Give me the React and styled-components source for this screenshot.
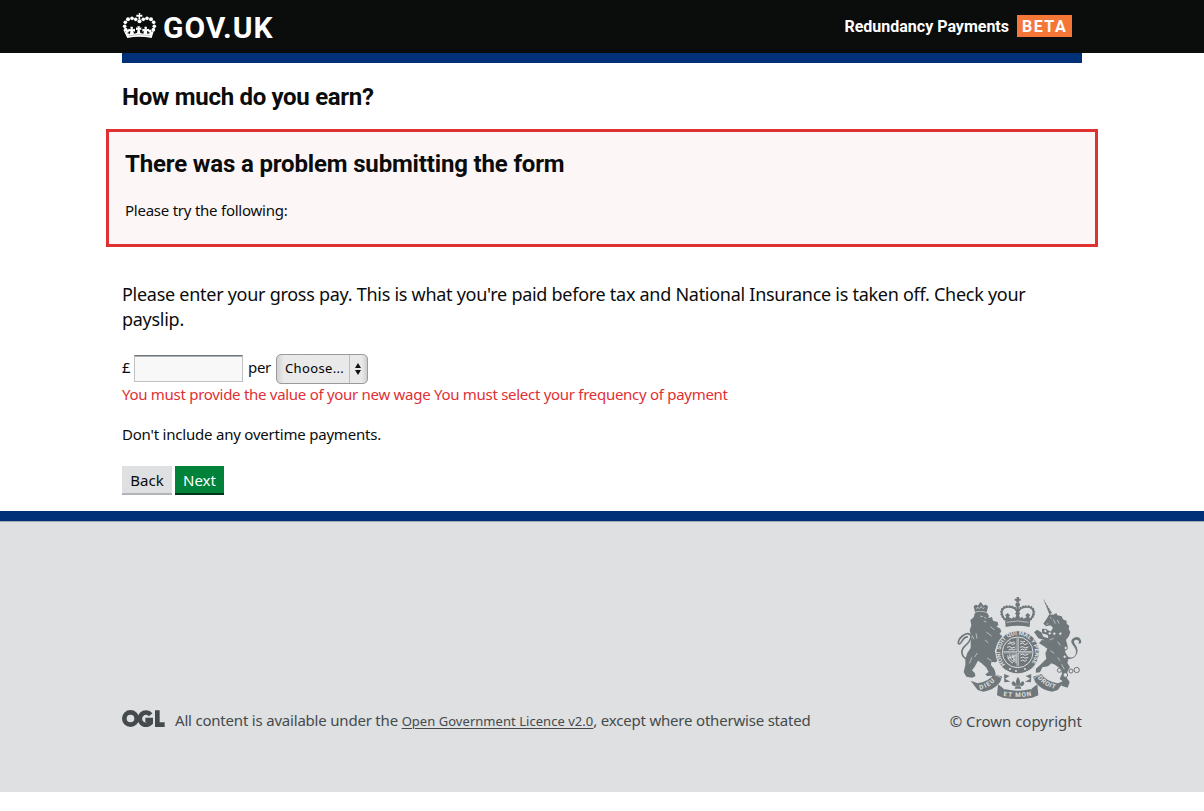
import React from 'react';
import styled, { createGlobalStyle } from 'styled-components';

const GlobalStyle = createGlobalStyle`
  *, *::before, *::after { box-sizing: border-box; }
  body {
    margin: 0;
    background: #fff;
    color: #0b0c0c;
    font-family: "Noto Sans", "Open Sans", sans-serif;
    font-size: 15px;
  }
  h1, h2, p { margin: 0; }
`;

const Header = styled.header`
  height: 53px;
  background: #0b0c0c;
`;

const Container = styled.div`
  width: 960px;
  margin: 0 auto;
`;

const HeaderInner = styled(Container)`
  display: flex;
  align-items: flex-start;
  justify-content: space-between;
  padding-right: 10px;
`;

const Logo = styled.a`
  display: flex;
  align-items: flex-start;
  gap: 6px;
  color: #fff;
  padding-top: 12px;
`;

const Wordmark = styled.span`
  font-family: Roboto, sans-serif;
  font-weight: 700;
  font-size: 30px;
  line-height: 32px;
  letter-spacing: 0.95px;
  white-space: nowrap;
`;

const Service = styled.div`
  display: flex;
  align-items: center;
  gap: 8px;
  height: 22px;
  margin-top: 15px;
  color: #fff;
  font-weight: 700;
`;

const ServiceName = styled.span`
  padding-top: 2px;
  font-family: Roboto, sans-serif;
  font-size: 16px;
  line-height: 22px;
  white-space: nowrap;
`;

const Beta = styled.span`
  width: 55px;
  height: 22px;
  padding-left: 5px;
  background: #f47738;
  font-family: Roboto, sans-serif;
  font-size: 16px;
  line-height: 23px;
  letter-spacing: 1.5px;
`;

const BlueBar = styled.div`
  height: 10px;
  background: #003078;
`;

const Title = styled.h1`
  margin-top: 19px;
  font-family: Roboto, sans-serif;
  font-size: 24px;
  font-weight: 700;
  line-height: 30px;
  letter-spacing: -0.31px;
  white-space: nowrap;
`;

const ErrorSummary = styled.section`
  height: 118px;
  margin: 17px -16px 0;
  padding: 17px 16px 0;
  border: 3px solid #df3034;
  background: #fdf6f6;
`;

const ErrorTitle = styled(Title).attrs({ as: 'h2' })`
  margin-top: 0;
  letter-spacing: -0.16px;
`;

const Text = styled.p`
  margin-top: ${(p) => p.$top || 0}px;
  color: ${(p) => p.$color || 'inherit'};
  font-size: ${(p) => p.$size || 15}px;
  line-height: ${(p) => p.$line || 20}px;
  letter-spacing: ${(p) => p.$track || 0}px;
`;

const FieldRow = styled.div`
  display: flex;
  align-items: center;
  height: 30px;
  margin-top: 22px;
`;

const FieldText = styled.label`
  width: ${(p) => p.$width}px;
  line-height: 20px;
  margin-top: -4px;
  letter-spacing: -0.3px;
`;

const AmountInput = styled.input`
  width: 109px;
  height: 27px;
  margin: 0 5px 2px 0;
  padding: 2px;
  border: 1px solid #bfc1c3;
  border-top: 1px solid #6f777b;
  box-shadow: inset 0 1px 0 #a9adaf;
  background: #f8f8f8;
  border-radius: 0;
`;

const Select = styled.button`
  display: flex;
  width: 92px;
  height: 30px;
  padding: 0;
  border: 1px solid #9a9a9a;
  border-radius: 5px;
  background: linear-gradient(90deg, #d2d2d2 0, #eaeaea 7px, #e9e9e9 85px, #cfcfcf 100%);
  color: #000;
  font-family: "Noto Sans", sans-serif;
  font-size: 13px;
  letter-spacing: 0.35px;
`;

const SelectValue = styled.span`
  flex: 1;
  padding-left: 8px;
  text-align: left;
  line-height: 27px;
`;

const SelectArrows = styled.span`
  display: flex;
  align-items: center;
  justify-content: center;
  width: 18px;
  height: 28px;
  padding-right: 2px;
  border-left: 1px solid #bdbdbd;
`;

const Actions = styled.div`
  display: flex;
  gap: 3px;
  margin-top: 22px;
`;

const Button = styled.button`
  width: ${(p) => p.$width}px;
  height: 29px;
  padding: 0;
  border: 0;
  background: ${(p) => (p.$primary ? '#00823b' : '#dee0e2')};
  box-shadow: inset 0 -2px 0 ${(p) => (p.$primary ? '#003618' : '#b1b5b9')};
  color: ${(p) => (p.$primary ? '#fff' : '#0b0c0c')};
  font-family: inherit;
  font-size: 15px;
  line-height: 29px;
`;

const Footer = styled.footer`
  height: 281px;
  margin-top: 16px;
  border-top: 10px solid #003078;
  background: #dee0e2;
  color: #454a4c;
  box-shadow: inset 0 1px 0 #a1acb2;
`;

const FooterInner = styled(Container)`
  display: flex;
  justify-content: space-between;
  align-items: flex-end;
  height: 211px;
`;

const Licence = styled.div`
  display: flex;
  align-items: flex-start;
  gap: 10px;
  height: 22px;
  margin-bottom: 1px;
  line-height: 22px;
  letter-spacing: -0.2px;
  white-space: nowrap;
`;

const LicenceLink = styled.a`
  font-size: 13px;
  letter-spacing: 0.04px;
  text-decoration: underline;
  text-underline-offset: 2px;
`;

const LicenceLogo = styled.svg`
  margin-top: 1px;
`;

const Copyright = styled.div`
  display: flex;
  flex-direction: column;
  align-items: flex-end;
  gap: 11px;
  line-height: 22px;
  white-space: nowrap;
`;

const CrownIcon = () => (
  <svg width="35" height="28" viewBox="36 36 105 84" fill="#fff" aria-hidden="true">
    <path d="M86 39h5l-1 5h7v6h-7l1 7h-6l1-7h-7v-6h8z" />
    <circle cx="88.500" cy="64" r="6" />
    <circle cx="77" cy="58" r="5.500" /><circle cx="66" cy="55" r="5.500" /><circle cx="54" cy="58" r="6" />
    <circle cx="46" cy="67" r="5.500" /><circle cx="44" cy="79" r="5.500" /><circle cx="47" cy="89" r="5.500" />
    <circle cx="100" cy="58" r="5.500" /><circle cx="111" cy="55" r="5.500" /><circle cx="123" cy="58" r="6" />
    <circle cx="131" cy="67" r="5.500" /><circle cx="133" cy="79" r="5.500" /><circle cx="130" cy="89" r="5.500" />
    <path d="M52 114Q88 106 125 114L133 88l-8 9-1-8h-8v8l5 2-9 3-1-9 6 2v-9l-7 2 1-8h-8l1 8-7-2v9l5-2-2 8-9-2-2-10 5 1v-8l-5 2 1-5h-8l1 5-5-2v8l5-1-2 10-9 2-2-8 5 2v-9l-7 2 1-8h-8l1 8-7-2v9l6-2-1 9-9-3 5-2v-8h-8l-1 8-8-9z" />
    <path d="M56 107Q88 100 121 107" fill="none" stroke="#0b0c0c" strokeWidth="1.500" opacity=".5" />
  </svg>
);

const OglIcon = () => (
  <LicenceLogo width="43" height="17" viewBox="0 0 129 51" fill="none" stroke="#454a4c" strokeWidth="14" aria-hidden="true">
    <circle cx="25.500" cy="25.500" r="18.500" />
    <path d="M86 14A18.500 18.500 0 1 0 86 38V30H70" />
    <path d="M106 1V44H128" />
  </LicenceLogo>
);

const RoyalArms = () => (
  <svg width="125" height="102" viewBox="21 21 375 306" fill="#6f777b" aria-hidden="true">
    <defs>
      <path id="garter" d="M165.700 223.400A52 52 0 1 1 240.300 223.400" />
      <path id="mottoLeft" d="M90 299Q122 292 141 265" />
      <path id="mottoMid" d="M160 317Q204 326 250 316" />
      <path id="mottoRight" d="M263 264Q282 289 320 299" />
    </defs>
    {/* royal crown */}
    <path d="M200 21h7v5h5v6h-5v5h-8v-5h-5v-6h6z" />
    <circle cx="203" cy="44" r="7" />
    <g fill="none" stroke="#6f777b" strokeWidth="5">
      <path d="M166 90C148 69 155 52 174 51C189 50 200 57 203 72C206 57 217 50 232 51C251 52 258 69 240 90" />
      <path d="M203 50V85" strokeWidth="7" />
    </g>
    <g fill="none" stroke="#6f777b" strokeWidth="7" strokeLinecap="round" strokeDasharray="0.100 8">
      <path d="M163 87C146 69 154 49 174 49C187 48 197 54 201 60" />
      <path d="M243 87C260 69 252 49 232 49C219 48 209 54 205 60" />
    </g>
    <path d="M165 87L169 80L165 76L173 69L180 76L176 81L185 86L191 80L195 85L199 76L195 70L203 64L211 70L207 76L211 85L216 80L221 86L230 81L226 76L233 69L241 76L237 80L241 87L239 111Q203 103 167 111Z" />
    <path d="M170 97Q203 89 236 97" fill="none" stroke="#dee0e2" strokeWidth="2" />
    {/* lion */}
    <path d="M75 66L71 50Q76 40 84 47L87 42L92 36L97 42L100 47Q109 40 114 50L110 67Q92 60 75 66Z" />
    <path d="M79 57l4-6 5 6m2-2l3-6 4 6m2 2l4-5" fill="none" stroke="#dee0e2" strokeWidth="2" />
    <path d="M75 68Q93 60 112 69L117 78L115 84L126 81L129 92L143 96L145 106L139 109L151 116L154 125L148 131L157 139L155 150L146 156L141 165L137 176L134 186L146 199L146 209L137 217L124 216L123 225L133 238L137 251L132 257L111 258L106 253L116 246L108 232L94 219L84 212L73 232L66 241L75 250L76 259L66 263L49 260L41 246L46 226L46 207L52 189L62 174L62 154L65 140L59 122L64 105L61 91L71 82Z" />
    <path d="M90 78l9 2M103 82l6 3M101 93l8 3M66 136l6 12M78 130l3 16M121 110l13 10M109 126l16 12M105 150l10 9M58 220l8-18M112 204l13 9M82 189l-8 12" fill="none" stroke="#dee0e2" strokeWidth="2" />
    <path d="M54 207Q44 207 38 196Q31 183 43 170Q64 152 63 137Q55 124 37 138Q24 149 25 160Q30 165 36 153Q45 139 54 141" fill="none" stroke="#6f777b" strokeWidth="5" />
    {/* unicorn */}
    <path d="M279 25L306 69L298 73Z" />
    <path d="M283 38l5-3m0 11l5-3m0 11l5-3m0 10l5-3" stroke="#dee0e2" strokeWidth="1.500" />
    <path d="M298 73L310 74L319 69L322 76L335 79L339 88L350 93L350 101L358 108L356 117L361 126L357 138L348 150L353 169L345 185L356 204L352 219L360 231L353 244L349 262L359 276L353 293L334 287L337 273L329 267L336 251L332 237L315 224L304 220L294 229L277 232L270 247L257 248L258 236L271 224L289 206L286 190L292 176L281 168L267 160L275 150L285 151L265 145L257 133L252 127L261 119L274 127L280 140L295 145L293 135L276 130L276 116L288 117L302 125L309 113L301 106L288 109L280 101L290 86Z" />
    <path d="M300 83l5 1M310 88l6 13M322 90l5 11M289 103l6-2M299 150l12-5M323 155l8 11M301 182l12 8M323 202l7 10M335 223l8 15" stroke="#dee0e2" strokeWidth="2" />
    <path d="M350 199Q370 209 377 193Q381 179 369 166Q357 151 372 143Q387 136 393 151Q396 164 385 160Q391 151 379 149Q367 151 375 163Q390 182 377 198Q366 212 348 204" />
    <g fill="#dee0e2" stroke="#6f777b" strokeWidth="3">
      <circle cx="286" cy="123" r="5" /><circle cx="299" cy="130" r="5" /><circle cx="313" cy="131" r="5" /><circle cx="331" cy="131" r="5" />
      <circle cx="347" cy="174" r="5" /><circle cx="344" cy="200" r="5" />
      <circle cx="328" cy="241" r="6" /><circle cx="346" cy="255" r="7" /><circle cx="363" cy="243" r="6" /><circle cx="380" cy="240" r="8" />
    </g>
    {/* garter and shield */}
    <circle cx="203" cy="187" r="65" stroke="#dee0e2" strokeWidth="3" />
    <circle cx="203" cy="187" r="46" fill="none" stroke="#dee0e2" strokeWidth="3" />
    <text fill="#dee0e2" fontFamily="Roboto, sans-serif" fontWeight="700" fontSize="18">
      <textPath href="#garter" textLength="236">HONI SOIT QUI MAL Y PENSE</textPath>
    </text>
    <path d="M203 145V229M161 187H245" stroke="#dee0e2" strokeWidth="6" />
    <path d="M203 145V229M161 187H245" stroke="#6f777b" strokeWidth="2" />
    <g fill="none" stroke="#dee0e2" strokeWidth="3">
      <path d="M173 162l8-3 6 5 9-4M171 172l8-2 7 4 10-3M176 180l7-3 6 3 8-3M178 155l6 3 10-2" />
      <path d="M211 195l7-3 7 4 10-4M211 204l8-3 6 4 10-3M212 213l6-3 7 4 6-5" />
      <path d="M210 162l8-3 6 5 9-4M210 172l8-2 7 4 10-3M211 180l7-3 6 3 8-3M211 153l6 3 8-2" />
      <path d="M173 196q2 18 16 23M179 193q1 18 14 22M186 193q0 13 10 18M192 193v22M198 192v28M173 205l23-8" />
    </g>
    <path d="M164 239Q203 265 242 239" fill="none" stroke="#dee0e2" strokeWidth="2" />
    <circle cx="198" cy="243" r="3" fill="#dee0e2" /><circle cx="180" cy="237" r="3" fill="#dee0e2" /><circle cx="225" cy="237" r="3" fill="#dee0e2" />
    {/* motto ribbon */}
    <path d="M62 272L83 280Q117 275 132 252L157 260L150 277Q130 302 100 305L83 300Z" />
    <path d="M344 272L323 280Q289 275 274 252L249 260L256 277Q276 302 306 305L323 300Z" />
    <path d="M144 283L163 297Q204 307 243 297L262 283L265 316L247 323Q204 331 159 323L141 316Z" />
    <path d="M135 255Q164 262 154 281L163 299M271 255Q242 262 252 281L243 299" fill="none" stroke="#dee0e2" strokeWidth="2" />
    <path d="M162 252L179 258L165 266L181 275L163 277ZM244 252L227 258L241 266L225 275L243 277Z" />
    <path d="M204 261Q214 272 208 284Q219 266 223 280Q221 290 211 289L214 296H194L197 289Q187 290 185 280Q189 266 200 284Q194 272 204 261Z" />
    <path d="M193 288h22" stroke="#dee0e2" strokeWidth="1.500" />
    <g fill="#dee0e2" fontFamily="Roboto, sans-serif" fontWeight="700" fontSize="19">
      <text><textPath href="#mottoLeft" textLength="53">DIEU</textPath></text>
      <text><textPath href="#mottoMid" textLength="85">ET MON</textPath></text>
      <text><textPath href="#mottoRight" textLength="62">DROIT</textPath></text>
    </g>
  </svg>
);

export default function App() {
  return (
    <>
      <GlobalStyle />
      <Header>
        <HeaderInner>
          <Logo>
            <CrownIcon />
            <Wordmark>GOV.UK</Wordmark>
          </Logo>
          <Service>
            <ServiceName>Redundancy Payments</ServiceName>
            <Beta>BETA</Beta>
          </Service>
        </HeaderInner>
      </Header>
      <Container as="main">
        <BlueBar />
        <Title>How much do you earn?</Title>
        <ErrorSummary>
          <ErrorTitle>There was a problem submitting the form</ErrorTitle>
          <Text $top={21} $track={-0.24}>Please try the following:</Text>
        </ErrorSummary>
        <Text $top={35} $size={18} $line={25} $track={-0.275}>
          Please enter your gross pay. This is what you're paid before tax and National Insurance is taken off. Check your
          <br />
          payslip.
        </Text>
        <FieldRow>
          <FieldText $width={12}>£</FieldText>
          <AmountInput aria-label="Gross pay" />
          <FieldText $width={28}>per</FieldText>
          <Select type="button">
            <SelectValue>Choose...</SelectValue>
            <SelectArrows>
              <svg width="8" height="14" viewBox="0 0 8 14" aria-hidden="true">
                <path d="M4 1L7 6H1ZM4 13L1 8H7Z" fill="#111" />
              </svg>
            </SelectArrows>
          </Select>
        </FieldRow>
        <Text $color="#df3034" $track={-0.285}>
          You must provide the value of your new wage You must select your frequency of payment
        </Text>
        <Text $top={20} $track={-0.21}>Don't include any overtime payments.</Text>
        <Actions>
          <Button $width={50}>Back</Button>
          <Button $width={49} $primary>Next</Button>
        </Actions>
      </Container>
      <Footer>
        <FooterInner>
          <Licence>
            <OglIcon />
            <span>
              All content is available under the <LicenceLink>Open Government Licence v2.0</LicenceLink>, except where
              otherwise stated
            </span>
          </Licence>
          <Copyright>
            <RoyalArms />
            <span>© Crown copyright</span>
          </Copyright>
        </FooterInner>
      </Footer>
    </>
  );
}
